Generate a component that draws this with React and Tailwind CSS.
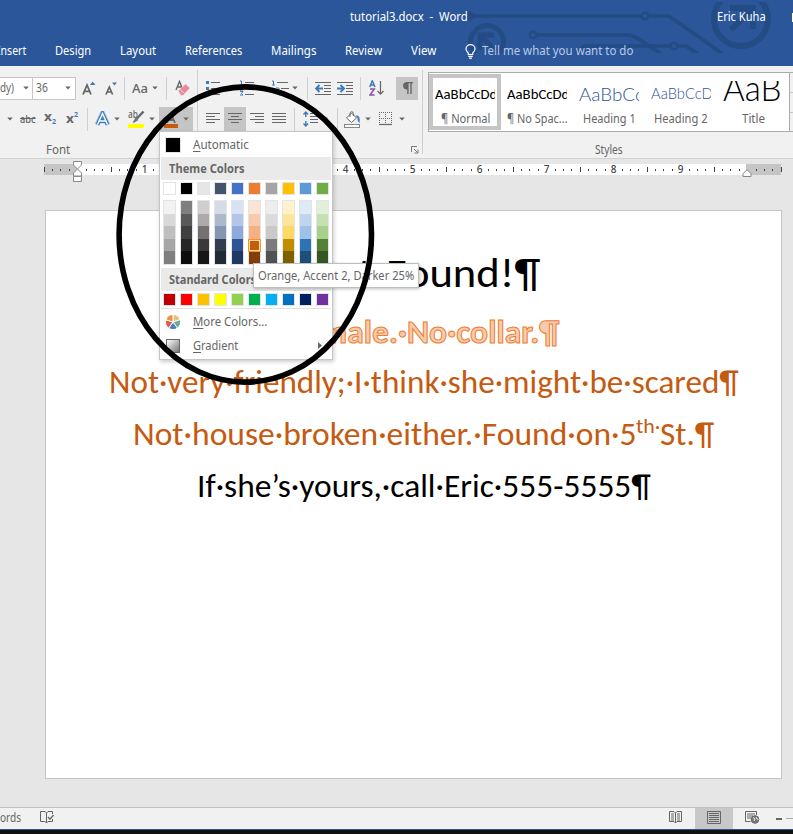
import React, { useLayoutEffect, useRef } from "react";

// Text squeezed or stretched to the width its own class gives it.
function Fit({ className = "", children }) {
  const outer = useRef(null);
  const inner = useRef(null);
  useLayoutEffect(() => {
    const ratio = outer.current.clientWidth / inner.current.offsetWidth;
    inner.current.style.transform = `scaleX(${ratio})`;
  }, []);
  return (
    <span ref={outer} className={"block shrink-0 whitespace-nowrap " + className}>
      <span ref={inner} className="inline-block origin-left">{children}</span>
    </span>
  );
}

function Caret({ className = "" }) {
  return (
    <svg className={"shrink-0 " + className} width="6" height="4" viewBox="0 0 6 4">
      <path d="M0.3 0.5h5.4L3 3.6z" fill="#666" />
    </svg>
  );
}

function Sep({ className = "" }) {
  return <div className={"w-px h-[23px] bg-[#d0d0d0] shrink-0 " + className} />;
}

function Lines({ rows, className = "" }) {
  return (
    <svg className={"shrink-0 " + className} width="14" height="12" viewBox="0 0 14 12" shapeRendering="crispEdges">
      {rows.map(([x, w], i) => (
        <rect key={i} x={x} y={i * 3} width={w} height="1" fill="#666" />
      ))}
    </svg>
  );
}

function Circuit() {
  return (
    <svg className="absolute left-0 top-0" width="793" height="66" viewBox="0 0 793 66">
      <defs>
        <clipPath id="band"><rect x="0" y="2" width="793" height="51" /></clipPath>
      </defs>
      <g clipPath="url(#band)" fill="none" stroke="#234b84" strokeWidth="3.6">
        <circle cx="469" cy="16" r="3" fill="#234b84" />
        <path d="M469 16h172M649 16h20l54 38" />
        <circle cx="645" cy="16" r="3.2" strokeWidth="2.6" />
        <circle cx="533" cy="35" r="3.2" strokeWidth="2.6" />
        <path d="M537 35h93l9 4 22 15M576 54l8-8h86M678 46h8l12 8" />
        <circle cx="674" cy="46" r="3.2" strokeWidth="2.6" />
        <circle cx="487" cy="42" r="16.5" strokeWidth="5" />
        <path d="M480 50V35h14M481 36l16 16" strokeWidth="5" />
        <circle cx="741" cy="19" r="27" strokeWidth="6" />
        <path d="M730 8h23v21M752 9l-21 21" strokeWidth="6" />
      </g>
    </svg>
  );
}

function TitleBar() {
  return (
    <header className="relative h-[66px] bg-[#2b579a] text-white text-[12px] overflow-hidden">
      <Circuit />
      <div className="relative flex items-center h-[34px] pl-[350px]">
        <Fit className="w-[118px]">tutorial3.docx&nbsp; -&nbsp; Word</Fit>
        <Fit className="w-[49px] ml-[249px]">Eric Kuha</Fit>
        <div className="w-px h-[9px] bg-white ml-[26px]" />
      </div>
      <nav className="relative flex items-center h-[32px] pt-[2px] -ml-[3px]">
        <Fit className="w-[29px]">Insert</Fit>
        <Fit className="w-[36px] ml-[29px]">Design</Fit>
        <Fit className="w-[36px] ml-[29px]">Layout</Fit>
        <Fit className="w-[57px] ml-[29px]">References</Fit>
        <Fit className="w-[45px] ml-[29px]">Mailings</Fit>
        <Fit className="w-[37px] ml-[29px]">Review</Fit>
        <Fit className="w-[25px] ml-[29px]">View</Fit>
        <svg className="ml-[29px] shrink-0" width="11" height="15" viewBox="0 0 11 15" fill="none" stroke="#fff" strokeWidth="1.2">
          <path d="M3.3 10.5V9C2 7.800 1 6.700 1 5a4.500 4.300 0 0 1 9 0c0 1.700-1 2.800-2.300 4v1.500zM3.300 12.400h4.400M4 14.200h3" />
        </svg>
        <Fit className="w-[151px] ml-[6px] text-[#b8c9e6]">Tell me what you want to do</Fit>
      </nav>
    </header>
  );
}

function FontGroup() {
  return (
    <section className="w-[197px] shrink-0 pt-[10px]">
      <div className="flex items-center h-[24px]">
        <div className="flex items-center w-[33px] h-[23px] bg-white border-y border-r border-[#c6c6c6] shrink-0">
          <Fit className="w-[14px]">dy)</Fit>
          <Caret className="ml-[9px]" />
        </div>
        <div className="flex items-center w-[43px] h-[23px] bg-white border-y border-r border-[#c6c6c6] pl-[3px] shrink-0">
          <Fit className="w-[12px]">36</Fit>
          <Caret className="ml-[17px]" />
        </div>
        <svg className="ml-[6px] shrink-0" width="14" height="15" viewBox="0 0 14 15">
          <path d="M1 13.500L5 4l4 9.500M2.500 10.300h5" fill="none" stroke="#666" strokeWidth="1.8" />
          <path d="M8 4l2.700-3.500L13.400 4z" fill="#3e7ab8" />
        </svg>
        <svg className="ml-[9px] shrink-0" width="13" height="15" viewBox="0 0 13 15">
          <path d="M1 13.500L4.300 6l3.300 7.500M2.200 11h4.200" fill="none" stroke="#666" strokeWidth="1.7" />
          <path d="M7 1.500h5L9.500 4.500z" fill="#3e7ab8" />
        </svg>
        <Sep className="ml-[6px]" />
        <Fit className="w-[16px] ml-[7px] text-[13px] font-medium">Aa</Fit>
        <Caret className="ml-[4px]" />
        <Sep className="ml-[8px]" />
        <svg className="ml-[8px] shrink-0" width="16" height="16" viewBox="0 0 16 16">
          <path d="M1 10L4.500 1.500L8 10M2.300 7h4.500" fill="none" stroke="#666" strokeWidth="1.4" />
          <path d="M3 11l7.500-7 4.500 4-7 7.500H6z" fill="#e8889a" stroke="#f0f0f0" strokeWidth=".6" />
          <path d="M4.800 9.500l4.400 3.600" stroke="#f5d5db" strokeWidth="1" />
        </svg>
      </div>
      <div className="flex items-center h-[24px] mt-[7px]">
        <Caret className="ml-[7px]" />
        <Fit className="w-[16px] ml-[7px] text-[11px] font-medium"><s>abc</s></Fit>
        <div className="flex ml-[8px] w-[14px] shrink-0 font-bold leading-[16px]">
          <Fit className="w-[8px] text-[12px]">x</Fit>
          <Fit className="w-[4px] text-[7px] pt-[5px] text-[#3e7ab8]">2</Fit>
        </div>
        <div className="flex ml-[8px] w-[14px] shrink-0 font-bold leading-[16px]">
          <Fit className="w-[8px] text-[12px]">x</Fit>
          <Fit className="w-[4px] text-[7px] -mt-[4px] text-[#3e7ab8]">2</Fit>
        </div>
        <Sep className="ml-[7px]" />
        <svg className="ml-[7px] shrink-0" width="16" height="16" viewBox="0 0 16 16" fill="none">
          <path d="M2 14L7.500 2L13 14M4.500 10h6" stroke="#a9cdf0" strokeWidth="5" />
          <path d="M2.500 13.500L7.500 2.500L12.500 13.500M4.500 10h6" stroke="#3e7ab8" strokeWidth="3.800" />
          <path d="M2.500 13.500L7.500 2.500L12.500 13.500M4.500 10h6" stroke="#fff" strokeWidth="1.400" />
        </svg>
        <Caret className="ml-[3px]" />
        <div className="relative ml-[8px] w-[17px] h-[18px] shrink-0 flex flex-col justify-between">
          <Fit className="w-[10px] text-[10px] leading-[9px] font-medium">ab</Fit>
          <div className="h-[4px] w-[16px] bg-[#ffff00]" />
          <svg className="absolute left-[3px] top-0" width="14" height="14" viewBox="0 0 14 14">
            <path d="M12.500 1.500L5.500 9" stroke="#666" strokeWidth="2.400" />
            <path d="M4.500 7.500l3 2.500-4 2.500-2 .3z" fill="#777" />
          </svg>
        </div>
        <Caret className="ml-[4px]" />
        <div className="flex items-center ml-[4px] w-[34px] h-[24px] bg-[#c5c5c5] shrink-0 pl-[5px]">
          <div className="flex flex-col justify-end w-[14px] h-[18px] -mt-px">
            <svg className="shrink-0" width="14" height="13" viewBox="0 0 14 13"><path d="M3 12L7 2.500L11 12M4.500 9h5" fill="none" stroke="#666" strokeWidth="1.800" /></svg>
            <div className="h-[4px] shrink-0 bg-[#c55a11]" />
          </div>
          <Caret className="ml-[5px]" />
        </div>
      </div>
      <div className="flex items-center h-[14px] mt-[12px] pl-[46px]"><Fit className="w-[24px]">Font</Fit></div>
    </section>
  );
}

function ParagraphGroup() {
  return (
    <section className="flex w-[226px] shrink-0 pt-[4px]">
      <div className="w-px h-[84px] bg-[#d0d0d0] shrink-0" />
      <div className="w-[224px] shrink-0 pt-[6px]">
        <div className="flex items-center h-[24px]">
          <svg className="ml-[8px] shrink-0" width="14" height="16" viewBox="0 0 14 16" shapeRendering="crispEdges">
            <path d="M0 1h3v3H0zM0 7h3v3H0zM0 13h3v3H0z" fill="#3e7ab8" />
            <path d="M5 2h9v1H5zM5 8h9v1H5zM5 14h9v1H5z" fill="#666" />
          </svg>
          <svg className="ml-[19px] shrink-0" width="15" height="16" viewBox="0 0 15 16">
            <path d="M1 1h1.500v4M1 5h3M1 6.500h2.500v1.500L1 10h3M1 11.500h3l-1.500 2L4 15H1" fill="none" stroke="#3e7ab8" strokeWidth="1" />
            <path d="M6 2h9v1H6zM6 8h9v1H6zM6 14h9v1H6z" fill="#666" />
          </svg>
          <svg className="ml-[18px] shrink-0" width="17" height="16" viewBox="0 0 17 16">
            <path d="M0 1h1.500v4M0 5h3M4 8h3v3.500H4V10h3M8 13v3" fill="none" stroke="#3e7ab8" strokeWidth="1" />
            <path d="M5 2h11v1H5zM9 8h8v1H9zM11 14h6v1h-6z" fill="#666" />
          </svg>
          <Caret className="ml-[3px]" />
          <Sep className="ml-[9px]" />
          <svg className="ml-[7px] shrink-0" width="17" height="13" viewBox="0 0 17 13">
            <path d="M0 0h16v1H0zM9 3h7v1H9zM9 6h7v1H9zM9 9h7v1H9zM0 12h16v1H0z" fill="#666" />
            <path d="M8 6.500H1.500M4.500 3L1 6.500L4.500 10" stroke="#3e7ab8" strokeWidth="1.900" fill="none" />
          </svg>
          <svg className="ml-[5px] shrink-0" width="17" height="13" viewBox="0 0 17 13">
            <path d="M0 0h16v1H0zM9 3h7v1H9zM9 6h7v1H9zM9 9h7v1H9zM0 12h16v1H0z" fill="#666" />
            <path d="M0 6.500h6.500M3.500 3L7 6.500L3.500 10" stroke="#3e7ab8" strokeWidth="1.900" fill="none" />
          </svg>
          <Sep className="ml-[6px]" />
          <svg className="ml-[8px] shrink-0" width="15" height="16" viewBox="0 0 15 16" fill="none">
            <path d="M.7 7L3.300.8L6 7M1.700 5h3.400" stroke="#3e7ab8" strokeWidth="1.500" />
            <path d="M1 9h4.300L1 15h4.600" stroke="#8e52a8" strokeWidth="1.500" />
            <path d="M11.500 1v13M8.500 11l3 3.200 3-3.200" stroke="#666" strokeWidth="1.200" />
          </svg>
          <div className="flex items-center justify-center w-[22px] h-[23px] ml-[12px] bg-[#c5c5c5] shrink-0">
            <svg width="11" height="13" viewBox="0 0 11 13">
              <path d="M4.500 0H11v1.200H9.700V12H8.300V1.200H6.600V12H5.200V7.500A3.700 3.700 0 0 1 4.500 0z" fill="#666" />
            </svg>
          </div>
        </div>
        <div className="flex items-center h-[24px] mt-[7px]">
          <Lines className="ml-[8px]" rows={[[0, 14], [0, 9], [0, 14], [0, 9]]} />
          <div className="flex items-center justify-center w-[22px] h-[24px] ml-[4px] bg-[#c5c5c5] shrink-0">
            <Lines rows={[[0, 14], [3, 8], [0, 14], [3, 8]]} />
          </div>
          <Lines className="ml-[4px]" rows={[[0, 14], [5, 9], [0, 14], [5, 9]]} />
          <Lines className="ml-[8px]" rows={[[0, 14], [0, 14], [0, 14], [0, 14]]} />
          <Sep className="ml-[8px]" />
          <svg className="ml-[8px] shrink-0" width="15" height="16" viewBox="0 0 15 16" fill="none">
            <path d="M2.800 1v5M2.800 10v5M.5 3.500l2.300-2.500 2.300 2.500M.5 12.500l2.300 2.500 2.300-2.500" stroke="#3e7ab8" strokeWidth="1.400" />
            <path d="M7 2.500h8M7 5.500h8M7 8.500h8M7 11.500h8" stroke="#666" />
          </svg>
          <Caret className="ml-[4px]" />
          <Sep className="ml-[9px]" />
          <svg className="ml-[6px] shrink-0" width="17" height="17" viewBox="0 0 17 17">
            <path d="M2.500 7L7.500 2l5 5-5 4.500z" fill="#fff" stroke="#666" />
            <path d="M6 6V2.500a1.700 1.700 0 0 1 3.400 0V5" fill="none" stroke="#666" />
            <path d="M11.500 4.500c3.500-.5 5 2 4 7.500-1.500-1-2-3-2-5z" fill="#3e7ab8" />
            <rect x=".5" y="13.500" width="15" height="3" fill="#fff" stroke="#888" />
          </svg>
          <Caret className="ml-[4px]" />
          <svg className="ml-[8px] shrink-0" width="14" height="14" viewBox="0 0 14 14" fill="none" stroke="#666">
            <path d="M.5 0v13M12.500 0v13M6.500 0v13M0 .5h13M0 6.500h13" strokeDasharray="1 1" />
            <path d="M0 12.500h13" strokeWidth="1.200" />
          </svg>
          <Caret className="ml-[6px]" />
        </div>
        <div className="flex h-[14px] mt-[14px] pl-[213px]">
          <svg className="mt-px" width="8" height="8" viewBox="0 0 8 8" fill="none" stroke="#777">
            <path d="M.5 6V.5H6M3 3l3.500 3.500M7 3.500V7H3.500" />
          </svg>
        </div>
      </div>
      <div className="w-px h-[84px] bg-[#d0d0d0] shrink-0" />
    </section>
  );
}

function StyleItem({ label, labelClass, preview, previewClass, selected }) {
  return (
    <div className={"w-[72px] h-[56px] shrink-0 flex flex-col items-center " + (selected ? "border-4 border-[#c5c5c5] pt-[3px]" : "pt-[7px]")}>
      <div className="w-[60px] h-[26px] overflow-hidden flex items-end text-black">
        <Fit className={previewClass}>{preview}</Fit>
      </div>
      <div className="h-[14px] mt-[5px] flex items-center"><Fit className={labelClass}>{label}</Fit></div>
    </div>
  );
}

function StylesGroup() {
  return (
    <section className="flex-1 min-w-0 pl-[5px] pt-[6px] overflow-hidden">
      <div className="flex h-[60px] w-[366px] bg-white border border-[#ababab]">
        <div className="flex w-[361px] pt-px border-r border-[#ababab] shrink-0">
          <StyleItem selected label="¶ Normal" labelClass="w-[49px]" preview="AaBbCcDd" previewClass="w-[62px] text-[15px] leading-[25px] font-['Carlito','Lato',sans-serif]" />
          <StyleItem label="¶ No Spac..." labelClass="w-[61px]" preview="AaBbCcDd" previewClass="w-[62px] text-[15px] leading-[25px] font-['Carlito','Lato',sans-serif]" />
          <StyleItem label="Heading 1" labelClass="w-[53px]" preview="AaBbCc" previewClass="w-[65px] text-[18px] leading-[26px] font-light font-[Lato] text-[#2f5496]" />
          <StyleItem label="Heading 2" labelClass="w-[54px]" preview="AaBbCcD" previewClass="w-[62px] text-[15px] leading-[28px] font-light font-[Lato] text-[#2f5496]" />
          <StyleItem label="Title" labelClass="w-[23px]" preview="AaB" previewClass="w-[58px] text-[36px] leading-[40px] font-light font-[Lato]" />
        </div>
        <div className="flex-1 bg-[#f1f1f1] flex flex-col">
          <div className="h-[20px] border-b border-[#c6c6c6]" />
          <div className="h-[20px] border-b border-[#c6c6c6]" />
        </div>
      </div>
      <div className="flex items-center h-[14px] mt-[11px] pl-[167px]"><Fit className="w-[28px]">Styles</Fit></div>
    </section>
  );
}

const ticks = Array.from({ length: 89 }, (_, i) => i - 4);

function Ruler() {
  return (
    <div className="relative h-[51px] pt-[5px] pl-[44px]">
      <div className="flex h-[11px] w-[737px]">
        <div className="w-[33px] bg-[#c5c5c5]" />
        <div className="w-[669px] bg-white" />
        <div className="w-[35px] bg-[#c5c5c5]" />
      </div>
      <div className="flex items-center h-[11px] -mt-[11px] -ml-[4px] w-[746px] text-[10px] font-medium text-[#444]">
        {ticks.map((k) => (
          <div key={k} className="flex items-center justify-center w-[8.375px] h-[11px] shrink-0">
            {k === 0 || k === 80 ? null : k % 8 === 0 ? (
              <span className="leading-[11px]">{k / 8}</span>
            ) : k % 4 === 0 ? (
              <div className="w-px h-[5px] bg-[#444]" />
            ) : (
              <div className="w-px h-[2px] bg-[#444]" />
            )}
          </div>
        ))}
      </div>
      <svg className="absolute left-[73px] top-[2px]" width="9" height="22" viewBox="0 0 9 22" fill="#fff" stroke="#888">
        <path d="M.5.500h8v3.500L4.500 8L.5 4zM4.500 8l4 4v3h-8v-3zM.5 15.500h8v5h-8z" />
      </svg>
      <svg className="absolute left-[742px] top-[10px]" width="10" height="8" viewBox="0 0 10 8" fill="#fff" stroke="#888">
        <path d="M5 .7l4 4v2.800H1V4.700z" />
      </svg>
    </div>
  );
}

function Document() {
  return (
    <main className="ml-[45px] w-[737px] h-[569px] bg-white border border-[#c6c6c6] pt-[27px] pl-[20px] font-['Carlito','Lato',sans-serif] text-[32px] leading-[54px] text-[#c55a11]">
      <div className="flex justify-center h-[67px] leading-[69px] text-[42px] text-black">
        <Fit className="w-[78px]">Cat·</Fit>
        <Fit className="w-[154px]">Found!¶</Fit>
      </div>
      <div className="flex justify-center h-[51px] text-[33px] font-bold text-[#f8cbad] [-webkit-text-stroke:1px_#ed7d31]"><Fit className="w-[271px]">Female.·No·collar.¶</Fit></div>
      <div className="flex justify-center h-[52px]"><Fit className="w-[630px]">Not·very·friendly;·I·think·she·might·be·scared¶</Fit></div>
      <div className="flex justify-center h-[52px]">
        <Fit className="w-[503px]">Not·house·broken·either.·Found·on·5</Fit>
        <Fit className="w-[24px] text-[21px] leading-[36px]">th·</Fit>
        <Fit className="w-[54px]">St.¶</Fit>
      </div>
      <div className="flex justify-center h-[52px] text-black">
        <Fit className="w-[454px]">If·she’s·yours,·call·Eric·555-5555¶</Fit>
      </div>
    </main>
  );
}

function StatusBar() {
  return (
    <footer className="h-[27px] border-t border-[#c0c0c0] bg-[#f1f1f1] flex flex-col text-[12px]">
      <div className="flex items-center h-[21px] shrink-0">
        <div className="w-[21px] shrink-0 -mt-[2px]"><Fit className="w-[21px]">ords</Fit></div>
        <svg className="ml-[19px] -mt-[3px] shrink-0" width="14" height="13" viewBox="0 0 14 13" fill="none" stroke="#666">
          <path d="M6.500 2L5 .500H.500v10H5l1.500 1.500L8 10.500h4.500V8M6.500 2v10M6.500 2L8 .500h4.500V3" />
          <path d="M8 6l2 2.200L13.500 4" strokeWidth="1.300" />
        </svg>
        <svg className="ml-[615px] -mt-[3px] shrink-0" width="13" height="13" viewBox="0 0 13 13" fill="none" stroke="#666">
          <path d="M6.500 2L5 .500H.500v10H5l1.500 1.500L8 10.500h4.500V.500H8zV12M2 3h3M2 5h3M2 7h3M2 9h3M8 3h3M8 5h3M8 7h3M8 9h3" />
        </svg>
        <div className="flex items-center justify-center ml-[13px] w-[38px] h-[21px] bg-[#c8c8c8] shrink-0">
          <svg className="-mt-[2px]" width="14" height="13" viewBox="0 0 14 13" fill="none" stroke="#666">
            <path d="M.5.500h13v12H.500zM2 2.500h10M2 4.500h10M2 6.500h10M2 8.500h10M2 10.500h10" />
          </svg>
        </div>
        <svg className="ml-[12px] -mt-[3px] shrink-0" width="15" height="13" viewBox="0 0 15 13" fill="none" stroke="#666">
          <path d="M5.500 10.500h-5V.500h11V4M2 3h8M2 5h6M2 7h4" />
          <circle cx="10" cy="8.500" r="3.800" fill="#777" />
          <path d="M8 6.500l2 1.500-1 2M11 6l1 2 1.500.500" stroke="#eee" />
        </svg>
        <div className="w-[6px] h-[2px] bg-[#666] ml-[16px] shrink-0" />
        <div className="w-[7px] h-px bg-[#aaa] ml-[4px]" />
      </div>
      <div className="h-px bg-[#2b579a] shrink-0" />
      <div className="h-[4px] bg-[#111] shrink-0" />
    </footer>
  );
}

const base = ["bg-white", "bg-black", "bg-[#e7e6e6]", "bg-[#44546a]", "bg-[#4472c4]", "bg-[#ed7d31]", "bg-[#a5a5a5]", "bg-[#ffc000]", "bg-[#5b9bd5]", "bg-[#70ad47]"];
const standard = ["bg-[#c00000]", "bg-[#ff0000]", "bg-[#ffc000]", "bg-[#ffff00]", "bg-[#92d050]", "bg-[#00b050]", "bg-[#00b0f0]", "bg-[#0070c0]", "bg-[#002060]", "bg-[#7030a0]"];
const shades = [
  ["bg-[#f2f2f2]", "bg-[#d9d9d9]", "bg-[#bfbfbf]", "bg-[#a6a6a6]", "bg-[#7f7f7f]"],
  ["bg-[#7f7f7f]", "bg-[#595959]", "bg-[#404040]", "bg-[#262626]", "bg-[#0d0d0d]"],
  ["bg-[#d0cece]", "bg-[#aeaaaa]", "bg-[#757171]", "bg-[#3a3838]", "bg-[#161616]"],
  ["bg-[#d6dce4]", "bg-[#acb9ca]", "bg-[#8497b0]", "bg-[#323e4f]", "bg-[#222a35]"],
  ["bg-[#d9e2f3]", "bg-[#b4c6e7]", "bg-[#8eaadb]", "bg-[#2f5496]", "bg-[#1f3864]"],
  ["bg-[#fbe4d5]", "bg-[#f7caac]", "bg-[#f4b083]", "bg-[#c55a11]", "bg-[#833c0b]"],
  ["bg-[#ededed]", "bg-[#dbdbdb]", "bg-[#c9c9c9]", "bg-[#7b7b7b]", "bg-[#525252]"],
  ["bg-[#fff2cc]", "bg-[#ffe599]", "bg-[#ffd966]", "bg-[#bf8f00]", "bg-[#7f6000]"],
  ["bg-[#deeaf6]", "bg-[#bdd6ee]", "bg-[#9cc2e5]", "bg-[#2e74b5]", "bg-[#1f4e79]"],
  ["bg-[#e2efd9]", "bg-[#c5e0b3]", "bg-[#a8d08d]", "bg-[#538135]", "bg-[#375623]"],
];

function Swatches({ colors, className }) {
  return (
    <div className={"flex gap-[4px] pl-[3px] " + className}>
      {colors.map((c) => <div key={c} className={"w-[13px] h-[13px] border border-[#e2e4e7] " + c} />)}
    </div>
  );
}

function ColorMenu() {
  return (
    <div className="absolute left-[159px] top-[131px] w-[174px] h-[229px] bg-white border border-[#c6c6c6] shadow-[1px_2px_4px_rgba(0,0,0,0.2)] text-[#666]">
      <div className="flex items-center h-[25px] pl-[5px]">
        <div className="w-[16px] h-[16px] bg-black border border-[#e2e4e7]" />
        <Fit className="w-[56px] ml-[12px]"><u className="underline-offset-2">A</u>utomatic</Fit>
      </div>
      <div className="flex items-center h-[23px] mx-px bg-[#eaeaea] pl-[8px] font-bold"><Fit className="w-[76px]">Theme Colors</Fit></div>
      <Swatches colors={base} className="mt-[2px]" />
      <div className="flex gap-[4px] pl-[3px] mt-[5px]">
        {shades.map((column, i) => (
          <div key={i} className="w-[13px] h-[65px] border border-[#e2e4e7] flex flex-col">
            {column.map((c, j) =>
              i === 5 && j === 3 ? (
                <div key={c} className="w-[13px] h-[13px] -ml-px shrink-0 border border-[#f29436]">
                  <div className={"w-[11px] h-[11px] border border-[#ffe294] " + c} />
                </div>
              ) : (
                <div key={c} className={"flex-1 " + c} />
              )
            )}
          </div>
        ))}
      </div>
      <div className="flex items-center h-[23px] mx-px mt-[3px] bg-[#eaeaea] pl-[8px] font-bold"><Fit className="w-[87px]">Standard Colors</Fit></div>
      <Swatches colors={standard} className="mt-[2px]" />
      <div className="h-px mx-px mt-[2px] bg-[#e2e2e2]" />
      <div className="flex items-center h-[25px] pl-[5px]">
        <svg width="16" height="16" viewBox="0 0 16 16" stroke="#fff" strokeWidth="1">
          <path d="M8 8V.500a7.500 7.500 0 0 1 7.100 5.200z" fill="#e8c07a" />
          <path d="M8 8l7.100-2.300a7.500 7.500 0 0 1-2.700 8.400z" fill="#6fa893" />
          <path d="M8 8l4.400 6.100a7.500 7.500 0 0 1-8.800 0z" fill="#4a7fc0" />
          <path d="M8 8l-4.400 6.100A7.500 7.500 0 0 1 .9 5.700z" fill="#d9604c" />
          <path d="M8 8L.9 5.700A7.500 7.500 0 0 1 8 .500z" fill="#e8924a" />
        </svg>
        <Fit className="w-[74px] ml-[12px]"><u className="underline-offset-2">M</u>ore Colors...</Fit>
      </div>
      <div className="flex items-center h-[23px] pl-[6px]">
        <div className="w-[14px] h-[14px] border border-[#666] bg-linear-to-br from-white to-[#777]" />
        <Fit className="w-[45px] ml-[13px]"><u className="underline-offset-2">G</u>radient</Fit>
        <svg className="ml-[80px]" width="4" height="7" viewBox="0 0 4 7"><path d="M0 0l4 3.500L0 7z" fill="#666" /></svg>
      </div>
    </div>
  );
}

export default function App() {
  return (
    <div className="relative w-[793px] h-[834px] overflow-hidden bg-[#e6e6e6] flex flex-col font-['Noto_Sans','Open_Sans',sans-serif] text-[12px] text-[#666]">
      <TitleBar />
      <div className="flex h-[93px] bg-[#f1f1f1] border-b border-[#d2d2d2] shrink-0 leading-[16px]">
        <FontGroup />
        <ParagraphGroup />
        <StylesGroup />
      </div>
      <Ruler />
      <Document />
      <div className="flex-1" />
      <StatusBar />
      <ColorMenu />
      <div className="absolute left-[253px] top-[263px] w-[166px] h-[25px] flex items-center pl-[4px] bg-white border border-[#bebebe] shadow-[1px_1px_3px_rgba(0,0,0,0.25)]">
        <Fit className="w-[156px]">Orange, Accent 2, Darker 25%</Fit>
      </div>
      <svg className="absolute left-[110px] top-[78px] pointer-events-none" width="270" height="312" viewBox="110 78 270 312">
        <ellipse cx="245.300" cy="234.500" rx="126.200" ry="147.600" fill="none" stroke="#000" strokeWidth="5.600" />
      </svg>
    </div>
  );
}
